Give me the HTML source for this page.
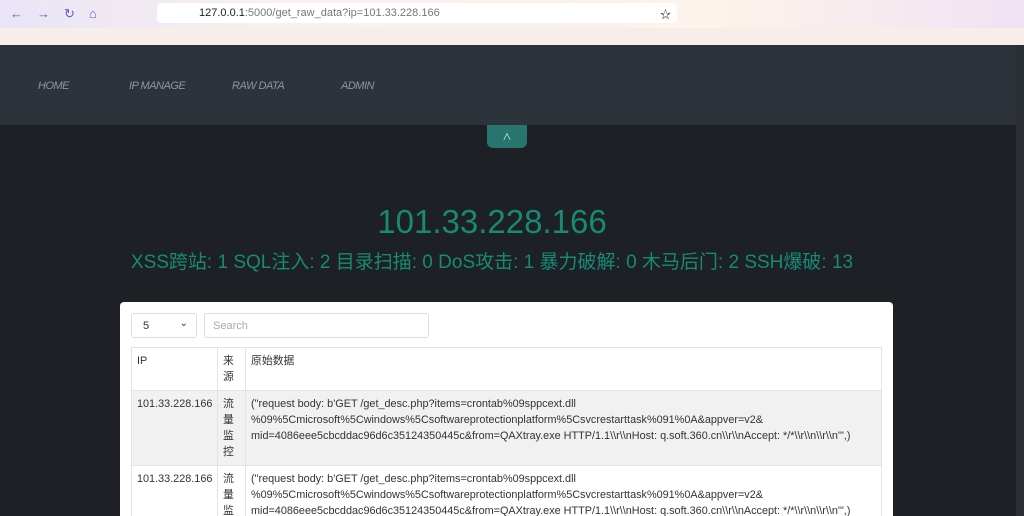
<!DOCTYPE html>
<html><head><meta charset="utf-8"><style>
*{margin:0;padding:0;box-sizing:border-box}
html,body{width:1024px;height:516px;overflow:hidden}
body{background:#1d2125;font-family:"Liberation Sans","Noto Sans CJK SC",sans-serif;position:relative}
.top{position:absolute;left:0;top:0;width:1024px;height:28px;background:linear-gradient(90deg,#e9e4f6,#fbf1ee 30%,#fdf3ea 70%,#efe3f4)}
.url{position:absolute;left:157px;top:3px;width:520px;height:20px;background:#fff;border-radius:4px;font-size:11px;color:#222;padding:4px 0 0 42px}
.url span{color:#777}
.bm{position:absolute;left:0;top:28px;width:1024px;height:17px;background:#f8eee9}
.nav{position:absolute;left:0;top:45px;width:1016px;height:80px;background:#2d333a}
.nav a{position:absolute;top:35px;color:#8d969e;font-size:11px;font-style:italic;letter-spacing:-0.5px}
.sb{position:absolute;left:1016px;top:45px;width:8px;height:471px;background:#2a2e32}
.tab{position:absolute;left:487px;top:125px;width:40px;height:23px;background:#26756f;border-radius:0 0 6px 6px;color:#dfe;font-size:9px;text-align:center;padding-top:5px}
h1{position:absolute;left:0;width:984px;top:203px;text-align:center;color:#178a73;font-weight:normal;font-size:33px}
h2{position:absolute;left:0;width:984px;top:247px;text-align:center;color:#178a73;font-weight:normal;font-size:19px}
.card{position:absolute;left:120px;top:302px;width:773px;height:230px;background:#fff;border-radius:4px;overflow:hidden}
.sel{position:absolute;left:11px;top:11px;width:66px;height:25px;border:1px solid #ddd;border-radius:3px;font-size:11px;padding:6px 0 0 11px;color:#333}
.sel i{position:absolute;right:8px;top:4px;font-style:normal;font-size:10px}
.srch{position:absolute;left:84px;top:11px;width:225px;height:25px;border:1px solid #ddd;border-radius:3px;font-size:11px;padding:6px 0 0 8px;color:#aaa}
table{position:absolute;left:11px;top:45px;width:751px;border-collapse:collapse;font-size:10.85px;color:#333;table-layout:fixed}
td{border:1px solid #e3e3e3;vertical-align:top;padding:5px 5px;line-height:16px;overflow:hidden;white-space:nowrap}
tr.g td{background:#f1f1f1}
</style></head><body>
<div class="top"><div style="position:absolute;left:10px;top:6px;color:#6a5acd;font-size:13px;letter-spacing:14px">←→↻⌂</div>
<div class="url">127.0.0.1<span>:5000/get_raw_data?ip=101.33.228.166</span><b style="position:absolute;right:6px;top:3px;font-weight:normal">☆</b></div></div>
<div class="bm"></div>
<div class="nav"><a style="left:38px">HOME</a><a style="left:129px">IP MANAGE</a><a style="left:232px">RAW DATA</a><a style="left:341px">ADMIN</a></div>
<div class="sb"></div>
<div class="tab">∧</div>
<h1>101.33.228.166</h1>
<h2>XSS跨站: 1 SQL注入: 2 目录扫描: 0 DoS攻击: 1 暴力破解: 0 木马后门: 2 SSH爆破: 13</h2>
<div class="card">
<div class="sel">5<i>⌄</i></div><div class="srch">Search</div>
<table>
<colgroup><col style="width:86px"><col style="width:28px"><col></colgroup>
<tr><td style="height:43px">IP</td><td>来<br>源</td><td>原始数据</td></tr>
<tr class="g"><td>101.33.228.166</td><td>流<br>量<br>监<br>控</td><td>("request body: b'GET /get_desc.php?items=crontab%09sppcext.dll<br>%09%5Cmicrosoft%5Cwindows%5Csoftwareprotectionplatform%5Csvcrestarttask%091%0A&amp;appver=v2&amp;<br>mid=4086eee5cbcddac96d6c35124350445c&amp;from=QAXtray.exe HTTP/1.1\\r\\nHost: q.soft.360.cn\\r\\nAccept: */*\\r\\n\\r\\n'",)</td></tr>
<tr><td>101.33.228.166</td><td>流<br>量<br>监<br>控</td><td>("request body: b'GET /get_desc.php?items=crontab%09sppcext.dll<br>%09%5Cmicrosoft%5Cwindows%5Csoftwareprotectionplatform%5Csvcrestarttask%091%0A&amp;appver=v2&amp;<br>mid=4086eee5cbcddac96d6c35124350445c&amp;from=QAXtray.exe HTTP/1.1\\r\\nHost: q.soft.360.cn\\r\\nAccept: */*\\r\\n\\r\\n'",)</td></tr>
</table></div>
</body></html>
